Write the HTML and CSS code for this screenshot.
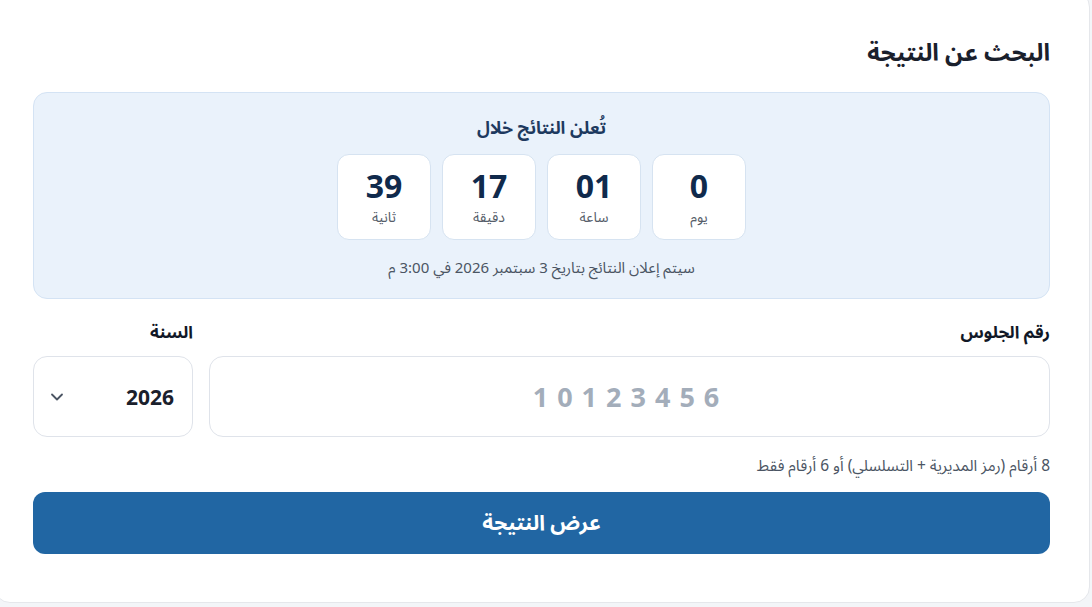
FILE: index.html
```html
<!DOCTYPE html>
<html lang="ar" dir="rtl">
<head>
  <meta charset="UTF-8">
  <meta name="viewport" content="width=device-width, initial-scale=1.0">
  <title>البحث عن النتيجة</title>
  <link rel="stylesheet" href="styles.css">
</head>
<body>
  <div class="card">
    <h2 class="title">البحث عن النتيجة</h2>

    <!-- Countdown -->
    <div class="countdown">
      <div class="countdown-title">تُعلن النتائج خلال</div>
      <div class="timer">
        <div class="unit"><span class="num">0</span><span class="lbl">يوم</span></div>
        <div class="unit"><span class="num">01</span><span class="lbl">ساعة</span></div>
        <div class="unit"><span class="num">17</span><span class="lbl">دقيقة</span></div>
        <div class="unit"><span class="num">39</span><span class="lbl">ثانية</span></div>
      </div>
      <div class="countdown-note">سيتم إعلان النتائج بتاريخ 3 سبتمبر 2026 في 3:00 م</div>
    </div>

    <!-- Form -->
    <form class="search-form">
      <div class="fields">
        <div class="field seat">
          <label for="seat">رقم الجلوس</label>
          <input type="text" id="seat" placeholder="10123456">
        </div>
        <div class="field year">
          <label for="year">السنة</label>
          <div class="select">
            <span class="select-value">2026</span>
            <svg class="chevron" width="20" height="20" viewBox="0 0 24 24" fill="none" stroke="#4b5563" stroke-width="2.2" stroke-linecap="round" stroke-linejoin="round"><path d="M6 9l6 6 6-6"/></svg>
          </div>
        </div>
      </div>
      <p class="hint">8 أرقام (رمز المديرية + التسلسلي) أو 6 أرقام فقط</p>
      <button type="button" class="submit">عرض النتيجة</button>
    </form>
  </div>
</body>
</html>
```

FILE: styles.css
```css
body {
  margin: 0;
  background: #f3f5f8;
  font-family: "Noto Sans", "Noto Sans Arabic", "DejaVu Sans", sans-serif;
  color: #111827;
  overflow: hidden;
}

.card {
  box-sizing: border-box;
  background: #fff;
  border: 1px solid #e5e7eb;
  border-radius: 16px;
  width: 1096px;
  margin: -9px 2px 0 auto;
  padding: 44px 39px 48px 38px;
}

.title {
  margin: 0 0 24px;
  font-size: 24px;
  font-weight: 700;
  color: #1a202c;
  line-height: 32px;
}

.countdown {
  background: #eaf2fb;
  border: 1px solid #d4e3f4;
  border-radius: 14px;
  padding: 22px 0 20px;
  text-align: center;
}

.countdown-title {
  font-size: 17.5px;
  font-weight: 700;
  color: #1e3a5f;
  line-height: 24px;
  margin-bottom: 15px;
}

.timer {
  display: flex;
  justify-content: center;
  gap: 11px;
}

.unit {
  width: 92px;
  height: 84px;
  background: #fff;
  border: 1px solid #d6e3f1;
  border-radius: 12px;
  display: flex;
  flex-direction: column;
  align-items: center;
  justify-content: center;
}

.num {
  font-size: 32px;
  font-weight: 700;
  color: #102a4c;
  line-height: 36px;
}

.lbl {
  font-size: 14px;
  color: #555d69;
  line-height: 20px;
  margin-top: 3px;
}

.countdown-note {
  margin-top: 16px;
  font-size: 15px;
  color: #4b5563;
  line-height: 22px;
}

.search-form {
  margin-top: 22px;
}

.fields {
  display: flex;
  gap: 16px;
}

.field {
  display: flex;
  flex-direction: column;
}

.field label {
  font-size: 17px;
  font-weight: 700;
  color: #111827;
  line-height: 22px;
  margin-bottom: 13px;
}

.seat {
  flex: 1;
}

.year {
  width: 160px;
}

.seat input {
  height: 81px;
  box-sizing: border-box;
  border: 1px solid #dfe3ea;
  border-radius: 14px;
  text-align: center;
  font-family: inherit;
  font-size: 27px;
  font-weight: 700;
  letter-spacing: 9px;
  padding: 0 0 0 2px;
  outline: none;
}

.seat input::placeholder {
  color: #a3adba;
}

.select {
  height: 81px;
  box-sizing: border-box;
  border: 1px solid #dfe3ea;
  border-radius: 14px;
  display: flex;
  align-items: center;
  justify-content: space-between;
  padding: 0 18px 0 13px;
}

.select-value {
  font-size: 21px;
  font-weight: 700;
  color: #1a202c;
}

.hint {
  margin: 17px 0 16px;
  font-size: 15.5px;
  color: #4b5563;
  line-height: 22px;
}

.submit {
  width: 100%;
  height: 62px;
  background: #2166a3;
  color: #fff;
  border: none;
  border-radius: 12px;
  font-family: inherit;
  font-size: 21px;
  font-weight: 700;
  cursor: pointer;
}
```
